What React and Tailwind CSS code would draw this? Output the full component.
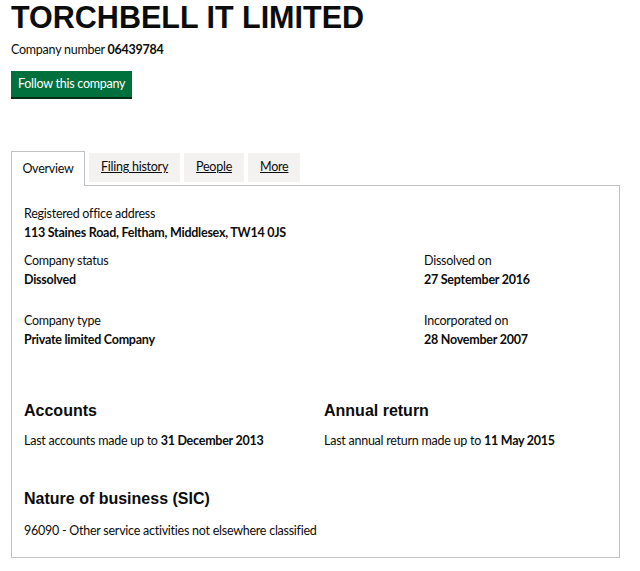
export default function App() {
  const body = { fontFamily: 'Lato, "Noto Sans", sans-serif' };
  const head = { fontFamily: '"Liberation Sans", Arial, sans-serif' };
  return (
    <div className="bg-white w-[640px] h-[571px] overflow-hidden text-[#0b0c0c] px-[11px] text-[12.5px] tracking-[-0.25px]" style={body}>
      <h1 className="text-[30.5px] leading-[34px] font-bold tracking-normal" style={head}>
        TORCHBELL IT LIMITED
      </h1>
      <p className="leading-4 mt-[8px]">
        Company number <strong className="font-bold">06439784</strong>
      </p>
      <button className="mt-[13px] h-[26px] px-[7px] bg-[#00703c] text-white leading-4 shadow-[0_2px_0_#002d18]">
        Follow this company
      </button>

      <div className="mt-[54px] w-[609px]">
        <ul className="flex items-end gap-1 relative z-10">
          <li className="h-[35px] w-[74px] flex items-center justify-center bg-white border border-[#bfc1c3] border-b-0 -mb-px">
            Overview
          </li>
          <li className="h-[29px] px-[12px] flex items-center bg-[#f3f2f1] underline mb-[3px]">Filing history</li>
          <li className="h-[29px] px-[12px] flex items-center bg-[#f3f2f1] underline mb-[3px]">People</li>
          <li className="h-[29px] px-[12px] flex items-center bg-[#f3f2f1] underline mb-[3px]">More</li>
        </ul>
        <div className="border border-[#bfc1c3] h-[373px] px-[12px] pt-[18px] leading-[19px]">
          <dl>
            <dt>Registered office address</dt>
            <dd className="font-bold">113 Staines Road, Feltham, Middlesex, TW14 0JS</dd>
          </dl>
          <div className="flex mt-[9px]">
            <div className="w-[400px]">
              <dl>
                <dt>Company status</dt>
                <dd className="font-bold">Dissolved</dd>
              </dl>
              <dl className="mt-[22px]">
                <dt>Company type</dt>
                <dd className="font-bold">Private limited Company</dd>
              </dl>
            </div>
            <div>
              <dl>
                <dt>Dissolved on</dt>
                <dd className="font-bold">27 September 2016</dd>
              </dl>
              <dl className="mt-[22px]">
                <dt>Incorporated on</dt>
                <dd className="font-bold">28 November 2007</dd>
              </dl>
            </div>
          </div>
          <div className="flex mt-[52px]">
            <div className="w-[300px]">
              <h2 className="text-[16px] leading-5 font-bold tracking-normal" style={head}>Accounts</h2>
              <p className="mt-[10px]">
                Last accounts made up to <strong>31 December 2013</strong>
              </p>
            </div>
            <div>
              <h2 className="text-[16px] leading-5 font-bold tracking-normal" style={head}>Annual return</h2>
              <p className="mt-[10px]">
                Last annual return made up to <strong>11 May 2015</strong>
              </p>
            </div>
          </div>
          <h2 className="text-[16px] leading-5 font-bold mt-[39px] tracking-normal" style={head}>Nature of business (SIC)</h2>
          <p className="mt-[12px]">96090 - Other service activities not elsewhere classified</p>
        </div>
      </div>
    </div>
  );
}
